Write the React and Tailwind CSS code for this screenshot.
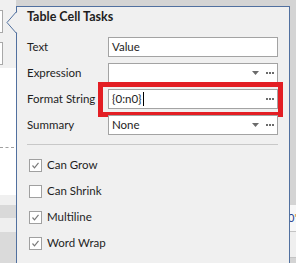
import React from 'react';

const font = { fontFamily: 'Lato, "Liberation Sans", sans-serif' };

function Dots() {
  return (
    <div className="flex gap-[1px]">
      <span className="w-[2px] h-[2px] bg-[#6b6b6b]" />
      <span className="w-[2px] h-[2px] bg-[#6b6b6b]" />
      <span className="w-[2px] h-[2px] bg-[#6b6b6b]" />
    </div>
  );
}

function Arrow() {
  return (
    <svg width="7" height="4" viewBox="0 0 7 4" className="shrink-0">
      <polygon points="0,0 7,0 3.5,4" fill="#6b6b6b" />
    </svg>
  );
}

function Field({ label, value, dropdown, dots, cursor, highlight }) {
  return (
    <div className="flex items-center h-[20px]">
      <div className="w-[81px] shrink-0 text-[11.5px] text-[#1e1e1e]">{label}</div>
      <div className="relative flex-1 h-full">
        <div className="flex items-center h-full bg-white border border-[#a3a3a3] pl-[3px] pr-[3px]">
          <span className="text-[11.5px] text-[#1e1e1e]">{value}</span>
          {cursor && <span className="w-[1px] h-[14px] bg-black ml-[1px]" />}
          <div className="flex-1" />
          {dropdown && (
            <div className="mr-[7px]">
              <Arrow />
            </div>
          )}
          {dots && <Dots />}
        </div>
        {highlight && (
          <div className="absolute left-[-10px] top-[-7px] w-[185px] h-[35px] border-[5px] border-[#e31e24]" />
        )}
      </div>
    </div>
  );
}

function Check({ label, checked }) {
  return (
    <div className="flex items-center h-[20px] pl-[2px]">
      <div className="w-[13px] h-[13px] bg-white border border-[#a0a0a0] flex items-center justify-center">
        {checked && (
          <svg width="11" height="11" viewBox="0 0 11 11">
            <path d="M2.5 5.5 L4.5 7.8 L8.5 2.8" fill="none" stroke="#7a7a7a" strokeWidth="1.2" />
          </svg>
        )}
      </div>
      <span className="ml-[5px] text-[11.5px] text-[#1e1e1e]">{label}</span>
    </div>
  );
}

export default function App() {
  return (
    <div className="relative w-[296px] h-[263px] overflow-hidden bg-[#d4d4d4] flex justify-between" style={font}>
      {/* background: left strip */}
      <div className="w-[16px] flex flex-col">
        <div className="h-[68px] bg-[#f0f0f0] flex flex-col">
          <div className="mt-[10px] w-[3px] h-[23px] bg-white border-y border-r border-[#a8a8a8]" />
          <div className="mt-[9px] w-[3px] h-[23px] bg-white border-y border-r border-[#a8a8a8]" />
        </div>
        <div className="h-[127px] bg-white flex flex-col">
          <div className="mt-[79px] w-[14px] border-t border-dashed border-[#a0a0a0]" />
        </div>
        <div className="h-[10px] bg-[#f0f0f0]" />
        <div className="h-[13px] bg-[#d9d9d9]" />
        <div className="h-[14px] bg-[#efefef]" />
        <div className="flex-1 bg-[#dadada]" />
      </div>

      {/* background: right strip */}
      <div className="w-[6px] flex flex-col">
        <div className="h-[205px]" />
        <div className="h-[27px] bg-[#f7f7f7] border-b border-[#c4c4c4] flex items-center overflow-hidden">
          <span className="text-[11px] text-[#1f3f8f] -ml-[2px]">0</span>
          <span className="text-[11px] text-[#d88a2a]">'</span>
        </div>
        <div className="h-[26px] bg-[#efefef] border-b border-[#c4c4c4]" />
      </div>

      {/* smart tag panel */}
      <div className="absolute left-[16px] top-[6px] w-[274px] h-[270px] bg-[#f0f0f0] border border-[#51709f]">
        <svg width="12" height="24" viewBox="0 0 12 24" className="absolute left-[-11px] top-[4px]">
          <polygon points="12,0 1,11.5 12,23" fill="#f0f0f0" />
          <polyline points="11,0 1,11.5 11,23" fill="none" stroke="#51709f" strokeWidth="1" />
        </svg>
        <div className="flex flex-col pl-[10px] pr-[11px] pt-[2px]">
          <div className="text-[12.5px] font-bold leading-[16px] text-[#1e1e1e]">Table Cell Tasks</div>
          <div className="mt-[12px] flex flex-col gap-[6px]">
            <Field label="Text" value="Value" />
            <Field label="Expression" value="" dropdown dots />
            <Field label="Format String" value="{0:n0}" dots cursor highlight />
            <Field label="Summary" value="None" dropdown dots />
          </div>
          <div className="mt-[9px] h-[1px] bg-[#c8c8c8]" />
          <div className="mt-[10px] flex flex-col gap-[6px]">
            <Check label="Can Grow" checked />
            <Check label="Can Shrink" />
            <Check label="Multiline" checked />
            <Check label="Word Wrap" checked />
          </div>
        </div>
      </div>
    </div>
  );
}
